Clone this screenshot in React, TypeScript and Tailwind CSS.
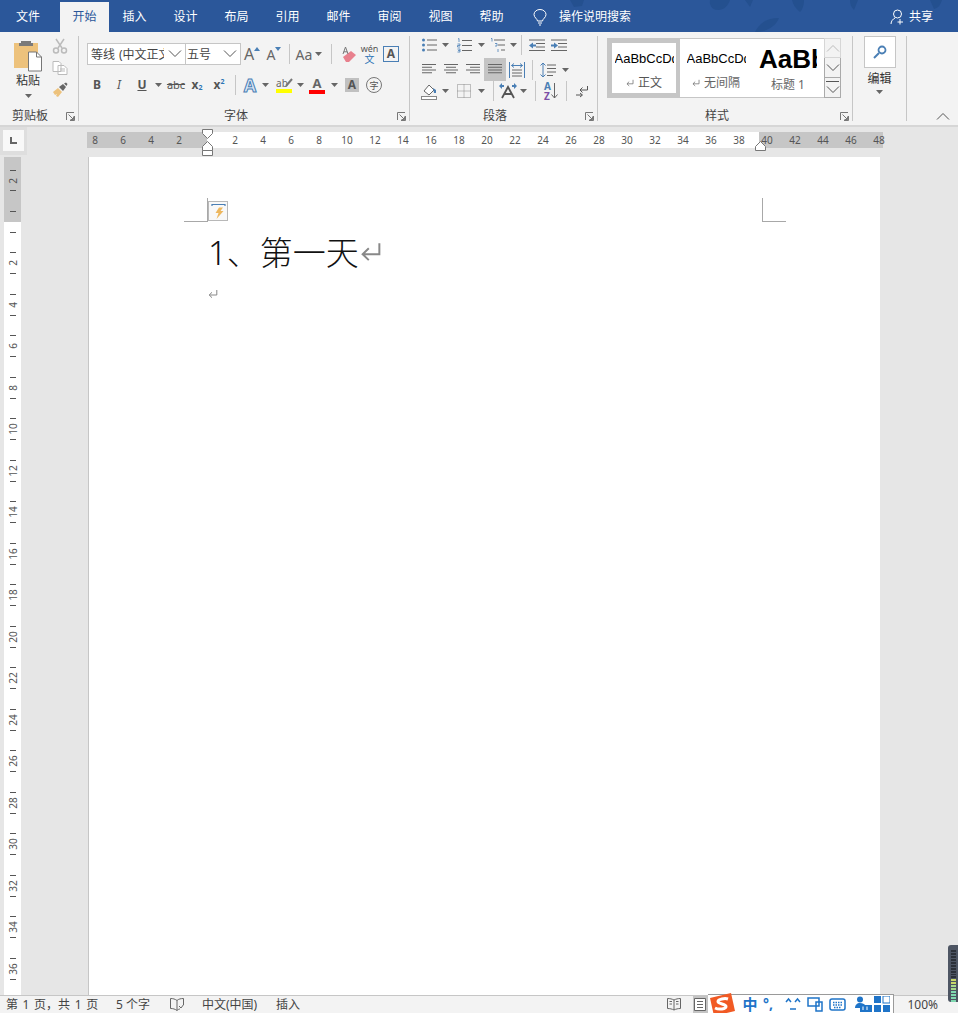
import React from "react";

const cell = "flex items-center justify-center shrink-0";
const sep = "w-px bg-[#c6c6c6] shrink-0";

function Caret({ className = "" }: { className?: string }) {
  return (
    <svg width="7" height="4" viewBox="0 0 7 4" className={className}>
      <path d="M0 0h7L3.5 4z" fill="#666" />
    </svg>
  );
}

function Launcher() {
  return (
    <svg width="9" height="9" viewBox="0 0 9 9" fill="none" stroke="#777" strokeWidth="1">
      <path d="M.5 8V.5H8M8.500 4v4.500H4M2.500 2.500L7.500 7.500M7.500 4.500v3h-3" />
    </svg>
  );
}

function Chevron({ up = false, color = "#555" }: { up?: boolean; color?: string }) {
  return (
    <svg width="14" height="8" viewBox="0 0 14 8" fill="none" stroke={color} strokeWidth="1">
      <path d={up ? "M1 7.500L7 1.500l6 6" : "M1 .5l6 6 6-6"} />
    </svg>
  );
}

function Lines({ rows, w = 16 }: { rows: [number, number][]; w?: number }) {
  return (
    <svg width={w} height="14" viewBox={`0 0 ${w} 14`} stroke="#666" strokeWidth="1">
      {rows.map(([a, b], i) => (
        <path key={i} d={`M${a} ${1.5 + i * 2.75}H${b}`} />
      ))}
    </svg>
  );
}

function ReturnMark({ size = 10, color = "#888", sw = 1 }: { size?: number; color?: string; sw?: number }) {
  return (
    <svg width={size} height={size} viewBox="0 0 10 10" fill="none" stroke={color} strokeWidth={sw}>
      <path d="M8.800 1v5H1.200M4 3.300L1.200 6 4 8.700" />
    </svg>
  );
}

function Group({ children, label, labelPad, launcher = true, className }: { children: React.ReactNode; label: string; labelPad: string; launcher?: boolean; className: string }) {
  return (
    <div className={`flex flex-col shrink-0 border-r border-[#c6c6c6] ${className}`}>
      <div className="flex-1 min-h-0">{children}</div>
      <div className="flex items-center h-[14px] pt-1 text-[12px] leading-[14px] text-[#444]">
        <span className={labelPad}>{label}</span>
        {launcher && (
          <span className="ml-auto mr-[3px] flex">
            <Launcher />
          </span>
        )}
      </div>
    </div>
  );
}

function RulerH({ nums, cls }: { nums: number[]; cls: string }) {
  return (
    <div className={`flex h-4 items-center ${cls}`}>
      {nums.map((n) => (
        <span key={n} className="w-[28px] shrink-0 text-center text-[10px] leading-4 text-[#555]">
          {n}
        </span>
      ))}
    </div>
  );
}

function VCell({ j }: { j: number }) {
  const abs = Math.abs(j);
  return (
    <div className="h-[10.375px] flex items-center justify-center shrink-0">
      {abs % 2 === 1 ? (
        <div className="w-[6px] h-px bg-[#555]" />
      ) : abs % 4 === 0 && abs > 0 ? (
        <span className="-rotate-90 text-[10px] leading-[10px] text-[#555]">{abs / 2}</span>
      ) : null}
    </div>
  );
}

function Leaf({ d }: { d: string }) {
  return <path d={d} fill="#24508f" />;
}

export default function App() {
  const up: number[] = [];
  for (let j = -5; j < 0; j++) up.push(j);
  const down: number[] = [];
  for (let j = 1; j <= 74; j++) down.push(j);
  return (
    <div className="relative w-[958px] h-[1013px] overflow-hidden flex flex-col bg-[#e6e6e6] font-['Noto_Sans','Noto_Sans_CJK_SC',sans-serif] text-[12px]">
      {/* tabs */}
      <div className="relative h-8 shrink-0 flex items-end bg-[#2b579a] text-white text-[12px] pl-1 overflow-hidden">
        <svg className="absolute left-[560px] top-0" width="398" height="32" viewBox="0 0 398 32">
          <Leaf d="M10 0h14l-2 6-8 1z" />
          <Leaf d="M150 0h20c-2 6-6 10-12 10s-9-5-8-10z" />
          <Leaf d="M195 32c4-9 12-14 24-14-3 8-12 14-24 14z" />
          <Leaf d="M185 0h8l-3 7z" />
          <Leaf d="M232 0h12c0 6-2 10-4 12-4-3-7-7-8-12z" />
          <Leaf d="M290 0h8l-4 10c-3-3-4-6-4-10z" />
          <Leaf d="M370 0h12c-2 6-4 8-8 9z" />
        </svg>
        <div className={`${cell} relative w-[48px] h-[30px]`}>文件</div>
        <div className={`${cell} relative ml-2 w-[49px] h-[30px] bg-[#f3f3f3] text-[#2b579a]`}>开始</div>
        {["插入", "设计", "布局", "引用", "邮件", "审阅", "视图", "帮助"].map((t) => (
          <div key={t} className={`${cell} relative w-[51px] h-[30px]`}>{t}</div>
        ))}
        <div className={`${cell} relative ml-[15px] w-4 h-[30px]`}>
          <svg width="14" height="17" viewBox="0 0 14 17" fill="none" stroke="#fff" strokeWidth="1">
            <path d="M4.500 12c0-2-3.500-3.500-3.500-6.500a6 5 0 0 1 12 0C13 8.500 9.500 10 9.500 12zM5 14h4M6 16h2" />
          </svg>
        </div>
        <div className="relative flex items-center h-[30px] ml-[11px]">操作说明搜索</div>
        <div className="relative ml-auto mr-[25px] h-[30px] flex items-center">
          <svg width="16" height="16" viewBox="0 0 16 16" fill="none" stroke="#fff" strokeWidth="1" className="mr-[3px]">
            <circle cx="7.500" cy="5" r="4" />
            <path d="M1 15c0-3 2-5 4-6M10 10v5.500M7.500 13H13" />
          </svg>
          <span>共享</span>
        </div>
      </div>

      {/* ribbon */}
      <div className="h-[95px] shrink-0 flex py-1 bg-[#f3f3f3] border-b-2 border-[#d6d6d6] text-[#444]">
        {/* clipboard */}
        <Group label="剪贴板" labelPad="pl-3" className="w-[79px]">
          <div className="flex">
            <div className="w-[48px] pl-[8px] flex flex-col items-center">
              <svg width="28" height="32" viewBox="0 0 28 32" className="mt-1">
                <rect x="0" y="3" width="24" height="25" fill="#edc27c" />
                <path d="M7 3V1h10v2h2v3H5V3z" fill="#7a7a7a" />
                <path d="M14.500 12h8l5 5v14h-13z" fill="#fff" stroke="#777" />
                <path d="M22.500 12v5h5" fill="none" stroke="#777" />
              </svg>
              <span className="leading-4 mt-[1px] text-[#333]">粘贴</span>
              <Caret className="mt-[5px]" />
            </div>
            <div className="flex flex-col items-center pl-1 w-[20px] pt-[2px]">
              <svg width="16" height="16" viewBox="0 0 16 16" fill="none" stroke="#bbb" strokeWidth="1.500">
                <path d="M4 1l6 9M12 1l-6 9" />
                <circle cx="4" cy="12.500" r="2.500" />
                <circle cx="12" cy="12.500" r="2.500" />
              </svg>
              <svg width="16" height="14" viewBox="0 0 16 14" fill="#fff" stroke="#bbb" className="mt-[7px]">
                <path d="M1 .5h6l2 2v8H1zM6 4.500h6l3 3v6H6z" />
                <path d="M8 8h5M8 10h5" />
              </svg>
              <svg width="16" height="16" viewBox="0 0 16 16" className="mt-[7px]">
                <path d="M1 10l5-4 4 4-4 5-2-1 1-2-2 1z" fill="#edc27c" />
                <path d="M7 5l4-3 3 3-3 4z" fill="#666" />
                <path d="M12 1.500l2-1 1.500 1.500-1 2z" fill="#666" />
              </svg>
            </div>
          </div>
        </Group>

        {/* font */}
        <Group label="字体" labelPad="pl-[145px]" className="w-[331px]">
          <div className="pl-2 pt-[7px]">
            <div className="flex items-center h-[22px]">
              <div className="flex items-center w-[99px] h-[22px] pl-[3px] bg-white border border-[#c6c6c6] overflow-hidden">
                <span className="w-[73px] overflow-hidden whitespace-nowrap text-[#444] pt-[1px]">等线<span className="ml-[4px]">(中文正文)</span></span>
                <span className="ml-auto mr-[3px] flex"><Chevron /></span>
              </div>
              <div className="flex items-center w-[55px] h-[22px] pl-[1px] bg-white border border-l-0 border-[#c6c6c6]">
                <span className="pt-[1px]">五号</span>
                <span className="ml-auto mr-[3px] flex"><Chevron /></span>
              </div>
              <div className={`${cell} relative w-[22px] text-[16px] text-[#666]`}>
                A<svg width="6" height="4" viewBox="0 0 6 4" className="mb-[10px]"><path d="M0 4l3-4 3 4z" fill="#4a7fb5" /></svg>
              </div>
              <div className={`${cell} w-[22px] text-[14px] text-[#666]`}>
                A<svg width="6" height="4" viewBox="0 0 6 4" className="mb-[10px]"><path d="M0 0l3 4 3-4z" fill="#4a7fb5" /></svg>
              </div>
              <div className={`${sep} h-5 ml-1`} />
              <div className={`${cell} ml-1 w-5 text-[14px] text-[#666]`}>Aa</div>
              <div className={`${cell} w-[9px]`}><Caret /></div>
              <div className={`${sep} h-5 ml-2`} />
              <div className={`${cell} ml-[5px] w-[22px]`}>
                <svg width="17" height="17" viewBox="0 0 17 17">
                  <path d="M3 11l8-6 5 4-7 7H6z" fill="#e8808d" />
                  <path d="M3 8l2.500-7L8 8M3.800 5.800h3.400" fill="none" stroke="#777" />
                </svg>
              </div>
              <div className={`${cell} w-[21px] flex-col`}>
                <span className="text-[#555] text-[9px] leading-[10px]">wén</span>
                <span className="text-[#2e75b6] text-[10px] leading-[10px]">文</span>
              </div>
              <div className={`${cell} w-[22px]`}>
                <span className="w-4 h-4 flex items-center justify-center border border-[#4a7fb5] text-[12px] leading-none font-bold text-[#555]">A</span>
              </div>
            </div>
            <div className="flex items-center h-[20px] mt-[10px] text-[#555]">
              <div className={`${cell} w-5 font-bold`}>B</div>
              <div className={`${cell} w-5 ml-0.5 italic`}>I</div>
              <div className={`${cell} w-5 ml-[3px] font-bold underline`}>U</div>
              <div className={`${cell} w-[10px] ml-px`}><Caret /></div>
              <div className={`${cell} w-[22px] ml-0.5 line-through text-[11px]`}>abc</div>
              <div className={`${cell} w-5 font-bold`}>x<span className="text-[7px] text-[#2e75b6] mt-[6px]">2</span></div>
              <div className={`${cell} w-5 ml-0.5 font-bold`}>x<span className="text-[7px] text-[#2e75b6] mb-[6px]">2</span></div>
              <div className={`${sep} h-5 ml-[6px]`} />
              <div className={`${cell} w-5 ml-1 text-[18px] font-bold text-[#dce8f5] [-webkit-text-stroke:1px_#4a7fb5]`}>A</div>
              <div className={`${cell} w-[10px]`}><Caret /></div>
              <div className={`${cell} relative w-5 ml-1 flex-col`}>
                <span className="text-[10px] leading-[12px] text-[#666] -ml-[4px]">ab</span>
                <svg width="8" height="9" viewBox="0 0 8 9" className="absolute right-[1px] top-[1px]"><path d="M1 8l6-7" stroke="#777" strokeWidth="2" /></svg>
                <span className="w-4 h-1 bg-[#ffff00]" />
              </div>
              <div className={`${cell} w-[10px] ml-px`}><Caret /></div>
              <div className={`${cell} w-5 ml-0.5 flex-col`}>
                <span className="text-[13px] leading-[13px] font-bold text-[#666]">A</span>
                <span className="w-4 h-1 bg-[#ff0000]" />
              </div>
              <div className={`${cell} w-[10px] ml-0.5`}><Caret /></div>
              <div className={`${cell} w-5 ml-[3px]`}>
                <span className="w-[14px] h-[14px] flex items-center justify-center bg-[#c0c0c0] text-[12px] font-bold leading-none text-[#555]">A</span>
              </div>
              <div className={`${cell} w-5 ml-0.5`}>
                <span className="w-4 h-4 flex items-center justify-center rounded-full border border-[#777] text-[9px] leading-none text-[#555]">字</span>
              </div>
            </div>
          </div>
        </Group>

        {/* paragraph */}
        <Group label="段落" labelPad="pl-[73px]" className="w-[188px]">
          <div className="pl-[11px]">
            <div className="flex items-center h-[18px]">
              <div className={`${cell} w-4`}>
                <svg width="15" height="14" viewBox="0 0 15 14">
                  <path d="M5 2h10M5 7h10M5 12h10" stroke="#666" />
                  <circle cx="1.500" cy="2" r="1.500" fill="#4a7fb5" /><circle cx="1.500" cy="7" r="1.500" fill="#4a7fb5" /><circle cx="1.500" cy="12" r="1.500" fill="#4a7fb5" />
                </svg>
              </div>
              <div className={`${cell} w-[16px]`}><Caret /></div>
              <div className={`${cell} w-[18px] ml-[2px]`}>
                <svg width="15" height="15" viewBox="0 0 15 15">
                  <path d="M5 2.500h10M5 7.500h10M5 12.500h10" stroke="#666" />
                  <path d="M1 1l1-.5V4M.5 6h2.500v1.500H.5V9H3M.5 11H3v1.500H1M3 12.500V14H.5" stroke="#4a7fb5" fill="none" strokeWidth=".8" />
                </svg>
              </div>
              <div className={`${cell} w-[16px]`}><Caret /></div>
              <div className={`${cell} w-[18px]`}>
                <svg width="16" height="15" viewBox="0 0 16 15">
                  <path d="M4 2h11M8 7h7M11 12h4" stroke="#666" />
                  <path d="M1 .5h1V3.500M5 5.500h2V8H5M8 11v3" stroke="#4a7fb5" fill="none" strokeWidth=".8" />
                </svg>
              </div>
              <div className={`${cell} w-[12px]`}><Caret /></div>
              <div className={`${sep} h-5 ml-[2px]`} />
              <div className={`${cell} w-[22px] ml-[4px]`}>
                <svg width="16" height="13" viewBox="0 0 16 13"><path d="M0 1h16M7 4.500h9M7 8h9M0 11.500h16" stroke="#666" /><path d="M0 6.500l4-3v2h3v2H4v2z" fill="#4a7fb5" /></svg>
              </div>
              <div className={`${cell} w-[22px]`}>
                <svg width="16" height="13" viewBox="0 0 16 13"><path d="M0 1h16M7 4.500h9M7 8h9M0 11.500h16" stroke="#666" /><path d="M7 6.500l-4-3v2H0v2h3v2z" fill="#4a7fb5" /></svg>
              </div>
            </div>
            <div className="flex items-center h-[23px] mt-1">
              <div className={`${cell} w-4 mr-[3px]`}><Lines rows={[[0, 14], [0, 10], [0, 14], [0, 10]]} w={14} /></div>
              <div className={`${cell} w-[22px]`}><Lines rows={[[0, 14], [2, 12], [0, 14], [2, 12]]} w={14} /></div>
              <div className={`${cell} w-[22px]`}><Lines rows={[[0, 14], [4, 14], [0, 14], [4, 14]]} w={14} /></div>
              <div className={`${cell} w-[22px] h-[23px] bg-[#c4c4c4]`}><Lines rows={[[0, 14], [0, 14], [0, 14], [0, 14]]} w={14} /></div>
              <div className={`${cell} w-[22px]`}>
                <svg width="16" height="16" viewBox="0 0 16 16" fill="none">
                  <path d="M.5 0v16M15.500 0v16" stroke="#4a7fb5" />
                  <path d="M3 8h10M3 11h10M3 14h10" stroke="#666" />
                  <path d="M2.500 3.500h11M5 1.500l-2.500 2 2.500 2M11 1.500l2.500 2-2.500 2" stroke="#4a7fb5" />
                </svg>
              </div>
              <div className={`${sep} h-5 ml-1`} />
              <div className={`${cell} w-[22px] ml-1`}>
                <svg width="16" height="16" viewBox="0 0 16 16" fill="none">
                  <path d="M7 3h9M7 6.500h9M7 10h9M7 13.500h6" stroke="#666" />
                  <path d="M3 1v14M.5 3.500L3 1l2.500 2.500M.5 12.500L3 15l2.500-2.500" stroke="#4a7fb5" />
                </svg>
              </div>
              <div className={`${cell} w-[10px] ml-[1px]`}><Caret /></div>
            </div>
            <div className="flex items-center h-[22px] -mt-[1px]">
              <div className={`${cell} w-4`}>
                <svg width="16" height="17" viewBox="0 0 16 17">
                  <path d="M3 8l5-6 5 5-5 5z" fill="#fff" stroke="#666" />
                  <path d="M12 5l3 2v3h-2z" fill="#4a7fb5" />
                  <rect x=".5" y="13.500" width="15" height="3" fill="#fff" stroke="#888" />
                </svg>
              </div>
              <div className={`${cell} w-[16px]`}><Caret /></div>
              <div className={`${cell} w-[18px] ml-[2px]`}>
                <svg width="14" height="14" viewBox="0 0 14 14" fill="none" stroke="#888" strokeDasharray="1 1">
                  <path d="M.5.5h13v13H.5zM7 .5v13M.5 7h13" />
                </svg>
              </div>
              <div className={`${cell} w-[16px]`}><Caret /></div>
              <div className={`${sep} h-5 ml-[4px]`} />
              <div className={`${cell} w-[18px] ml-[5px]`}>
                <svg width="18" height="16" viewBox="0 0 18 16">
                  <path d="M3 15L9 4l6 11M5.500 11h7" stroke="#555" strokeWidth="1.800" fill="none" />
                  <path d="M0 3l3-3v2h2v2H3v2zM18 3l-3-3v2h-2v2h2v2z" fill="#4a7fb5" />
                </svg>
              </div>
              <div className={`${cell} w-[10px] ml-[1px]`}><Caret /></div>
              <div className={`${sep} h-5 ml-[7px]`} />
              <div className={`${cell} w-[22px] ml-[4px] flex-row`}>
                <span className="flex flex-col text-[10px] leading-[10px] font-bold">
                  <span className="text-[#4a7fb5]">A</span>
                  <span className="text-[#7b4fa6]">Z</span>
                </span>
                <svg width="7" height="16" viewBox="0 0 7 16" fill="none" stroke="#666"><path d="M3.500 0v15M.5 11.500l3 3.500 3-3.500" /></svg>
              </div>
              <div className={`${sep} h-5 ml-[4px]`} />
              <div className={`${cell} w-[22px] ml-[4px]`}>
                <svg width="12" height="13" viewBox="0 0 12 13" fill="none" stroke="#555">
                  <path d="M11.500 1v4H4M6.500 2.500L4 5l2.500 2.500" />
                  <path d="M0 10h6M4 8l2.500 2L4 12" />
                </svg>
              </div>
            </div>
          </div>
        </Group>

        {/* styles */}
        <Group label="样式" labelPad="pl-[107px]" className="w-[255px]">
          <div className="pl-[9px] pt-[2px] flex">
            <div className="flex w-[218px] h-[60px] bg-white border border-[#c6c6c6] overflow-hidden">
              <div className="w-[72px] h-full border-4 border-[#c6c6c6] flex flex-col items-center shrink-0">
                <span className="w-[59px] overflow-hidden whitespace-nowrap mt-[8px] text-[13px] leading-4 text-black font-['Liberation_Sans']">AaBbCcDd</span>
                <span className="mt-[8px] leading-4 text-[#555] flex items-center gap-1"><ReturnMark size={8} color="#777" />正文</span>
              </div>
              <div className="w-[72px] flex flex-col items-center shrink-0">
                <span className="w-[59px] overflow-hidden whitespace-nowrap mt-[12px] text-[13px] leading-4 text-black font-['Liberation_Sans']">AaBbCcDd</span>
                <span className="mt-[8px] leading-4 text-[#666] flex items-center gap-1"><ReturnMark size={8} color="#777" />无间隔</span>
              </div>
              <div className="w-[72px] flex flex-col items-center shrink-0">
                <span className="w-[58px] overflow-hidden whitespace-nowrap mt-[1px] text-[26px] leading-[38px] font-bold text-black font-['Liberation_Sans']">AaBbC</span>
                <span className="mt-[-1px] leading-4 text-[#666]">标题 1</span>
              </div>
            </div>
            <div className="flex flex-col w-[17px] h-[60px] -ml-px">
              <div className="h-5 flex items-center justify-center border border-[#d6d6d6]"><Chevron up color="#bbb" /></div>
              <div className="h-[20px] flex items-center justify-center border border-t-0 border-[#aaa]"><Chevron /></div>
              <div className="h-[20px] flex flex-col gap-[4px] items-center justify-center border border-t-0 border-[#aaa]">
                <div className="w-[13px] h-px bg-[#555]" />
                <Chevron />
              </div>
            </div>
          </div>
        </Group>

        {/* editing */}
        <Group label="" labelPad="" launcher={false} className="w-[54px]">
          <div className="flex flex-col items-center">
            <div className="w-[32px] h-[32px] bg-white border border-[#c6c6c6] flex items-center justify-center">
              <svg width="14" height="14" viewBox="0 0 14 14" fill="none" stroke="#4a7fb5">
                <circle cx="9" cy="5" r="3.500" strokeWidth="1.800" />
                <path d="M6 8l-5 5" strokeWidth="2" />
              </svg>
            </div>
            <span className="mt-[1px] leading-5 text-[#333]">编辑</span>
            <Caret className="mt-[1px]" />
          </div>
        </Group>

        <div className="flex-1 flex items-end justify-end pr-2 pb-[1px]">
          <Chevron up />
        </div>
      </div>

      {/* horizontal ruler */}
      <div className="relative h-[30px] shrink-0 flex pt-[5px]">
        <div className="absolute left-0 top-0 w-[27px] h-[28px] bg-[#dedede] p-[3px]">
          <div className="w-[21px] h-[21px] bg-[#f8f8f8] flex items-center justify-center">
            <svg width="7" height="7" viewBox="0 0 7 7"><path d="M0 0h2v5h5v2H0z" fill="#666" /></svg>
          </div>
        </div>
        <div className="ml-[87px] w-[120px] h-4 bg-[#c6c6c6] flex justify-end">
          <RulerH nums={[8, 6, 4, 2]} cls="mr-[14px]" />
        </div>
        <div className="w-[552px] h-4 bg-white pl-[14px]">
          <RulerH nums={[2, 4, 6, 8, 10, 12, 14, 16, 18, 20, 22, 24, 26, 28, 30, 32, 34, 36, 38]} cls="" />
        </div>
        <div className="w-[124px] h-4 bg-[#c6c6c6]">
          <RulerH nums={[40, 42, 44, 46, 48]} cls="-ml-[6px]" />
        </div>
        <svg className="absolute left-[201px] top-[2px]" width="13" height="27" viewBox="0 0 13 27" fill="#f3f3f3" stroke="#777">
          <path d="M1.500.5h10v4L6.500 9.500 1.500 4.500z" fill="#fff" />
          <path d="M6.500 12.500l5 5v4h-10v-4z" fill="#fff" />
          <path d="M1.500 21.500h10v5h-10z" fill="#fff" />
        </svg>
        <svg className="absolute left-[754px] top-[14px]" width="13" height="10" viewBox="0 0 13 10" stroke="#777">
          <path d="M6.500.5l5 5v4h-10v-4z" fill="#fff" />
        </svg>
      </div>

      {/* body */}
      <div className="flex-1 min-h-0 flex">
        <div className="w-[88px] shrink-0 pl-1 overflow-hidden">
          <div className="w-[17px] h-full flex flex-col overflow-hidden">
            <div className="h-[65px] shrink-0 bg-[#c6c6c6] pt-[8px] flex flex-col">
              {up.map((j) => <VCell key={j} j={j} />)}
            </div>
            <div className="flex-1 bg-white pt-[5px] flex flex-col overflow-hidden">
              {down.map((j) => <VCell key={j} j={j} />)}
            </div>
          </div>
        </div>
        <div className="relative w-[792px] shrink-0 bg-white border-l border-[#c6c6c6] pl-[119px] pt-[75px]">
          <div className="absolute left-[95px] top-[41px] w-6 h-6 border-r border-b border-[#a8a8a8]" />
          <div className="absolute left-[673px] top-[41px] w-6 h-6 border-l border-b border-[#a8a8a8]" />
          <div className="absolute left-[119px] top-[44px] w-[20px] h-[20px] bg-[#f8f8f8] border border-[#b8b8b8] flex items-center justify-center">
            <svg width="16" height="16" viewBox="0 0 16 16">
              <path d="M2 3V1.500h13V3" fill="none" stroke="#4a7fb5" strokeWidth="1.200" />
              <path d="M9 4.500L5.500 10h3L6.500 16l7-8h-3l2.500-3.500z" fill="#edb75e" />
            </svg>
          </div>
          <div className="flex items-center h-[42px] text-[33px] leading-[42px] font-light text-[#111] whitespace-nowrap">
            <span>1、第一天</span>
            <span className="ml-[1px] mt-[-3px] flex"><ReturnMark size={22} color="#888" sw={0.9} /></span>
          </div>
          <div className="mt-[15px] flex"><ReturnMark size={10} color="#888" /></div>
        </div>
        <div className="flex-1" />
      </div>

      {/* status */}
      <div className="h-[18px] shrink-0 flex items-center bg-[#f3f3f3] border-t border-[#c6c6c6] text-[12px] leading-4 text-[#444] pl-[6px]">
        <span className="w-[110px] shrink-0 [word-spacing:1.500px]">第 1 页，共 1 页</span>
        <span className="w-[54px] shrink-0">5 个字</span>
        <span className="w-[32px] shrink-0 flex">
          <svg width="14" height="13" viewBox="0 0 14 13" fill="none" stroke="#666">
            <path d="M7 2.500C5 1 3 .5.500.5v10c2.500 0 4.500.5 6.500 2 1-1 2-1.500 3-1.500M7 2.500v10M7 2.500C8.500 1 11 .5 13.500.5V7" />
            <path d="M9 8l2 2 3-4" />
          </svg>
        </span>
        <span className="w-[74px] shrink-0">中文(中国)</span>
        <span className="w-[388px] shrink-0">插入</span>
        <div className="w-[20px] shrink-0 flex justify-center">
          <svg width="14" height="13" viewBox="0 0 14 13" fill="none" stroke="#666">
            <path d="M7 2C5 1 3 .5.500.5v10c2.500 0 4.500.5 6.500 1.500 2-1 4-1.500 6.500-1.500V.5C11 .5 9 1 7 2zM7 2v10M2.500 3.500h2.500M2.500 6h2.500M9 3.500h2.500M9 6h2.500" />
          </svg>
        </div>
        <div className="ml-[9px] w-[20px] h-full bg-[#c4c4c4] shrink-0 flex items-center pl-[1px]">
          <svg width="12" height="13" viewBox="0 0 12 13" fill="#fff" stroke="#666"><path d="M.5.5h11v12H.5zM3 3.500h6M3 6.500h6M3 9.500h6" /></svg>
        </div>
        <span className="ml-auto mr-5">100%</span>
      </div>

      {/* IME toolbar */}
      <div className="absolute left-[708px] top-[994px] w-[186px] h-[19px] bg-white border-t border-r border-[#9a9a9a] flex items-center text-[#1f74c8]">
        <svg width="28" height="22" viewBox="0 0 28 22" className="-mt-[3px] shrink-0">
          <path d="M2 6l21-5 4 18-21 5z" fill="#f15a24" />
          <path d="M20 7c-3-1-10 0-10 2.500S18 12 18 14.500 11 18 7 16" fill="none" stroke="#fff" strokeWidth="3" />
        </svg>
        <span className="w-[20px] ml-[4px] text-[15px] font-bold leading-none text-center shrink-0">中</span>
        <span className="w-[16px] text-[14px] font-bold leading-none text-center shrink-0">°,</span>
        <svg width="16" height="14" viewBox="0 0 16 14" fill="none" stroke="#1f74c8" strokeWidth="1.500" className="ml-[9px] shrink-0">
          <path d="M1 5l2.500-3L6 5M10 5l2.500-3L15 5M5 12h6" />
        </svg>
        <svg width="16" height="15" viewBox="0 0 16 15" fill="none" stroke="#1f74c8" strokeWidth="1.500" className="ml-[6px] shrink-0">
          <path d="M1 1h11v8H1zM9 5h6v9H9z" />
        </svg>
        <svg width="17" height="13" viewBox="0 0 17 13" fill="none" stroke="#1f74c8" strokeWidth="1.500" className="ml-[6px] shrink-0">
          <rect x="1" y="1" width="15" height="11" rx="2" />
          <path d="M4 4.500h9M4 7h9M5 9.500h7" strokeDasharray="1.500 1" />
        </svg>
        <svg width="18" height="16" viewBox="0 0 18 16" className="ml-[8px] shrink-0">
          <circle cx="6" cy="3.500" r="3" fill="#1f74c8" />
          <path d="M1 12c0-3 2-5 5-5s4 1 5 2v3z" fill="#1f74c8" />
          <rect x="6" y="9" width="12" height="7" fill="#1f74c8" />
          <path d="M9 10.500V14M13 10.500V14" stroke="#fff" />
        </svg>
        <svg width="16" height="16" viewBox="0 0 16 16" className="ml-[2px] shrink-0">
          <rect x="0" y="0" width="7" height="7" fill="#1f74c8" />
          <rect x="9" y="0" width="7" height="7" fill="none" stroke="#1f74c8" />
          <rect x="0" y="9" width="7" height="7" fill="#1f74c8" />
          <rect x="9" y="9" width="7" height="7" fill="#1f74c8" />
        </svg>
      </div>

      {/* floating meter */}
      <div className="absolute left-[948px] top-[945px] w-[10px] h-[57px] rounded-l-[3px] bg-[#4d5563] flex flex-col items-center gap-[1px] pt-[5px]">
        {["#2b3038", "#2b3038", "#2b3038", "#2b3038", "#2b3038", "#2b3038", "#2b3038", "#2b3038", "#2b3038", "#2b3038", "#c8d86a", "#c8d86a", "#a6d88a", "#a6d88a", "#7fd8b0", "#7fd8b0", "#7fd8b0", "#7fd8b0"].map((c, i) => (
          <div key={i} className="w-[5px] h-[2px]" style={{ background: c }} />
        ))}
      </div>
    </div>
  );
}
